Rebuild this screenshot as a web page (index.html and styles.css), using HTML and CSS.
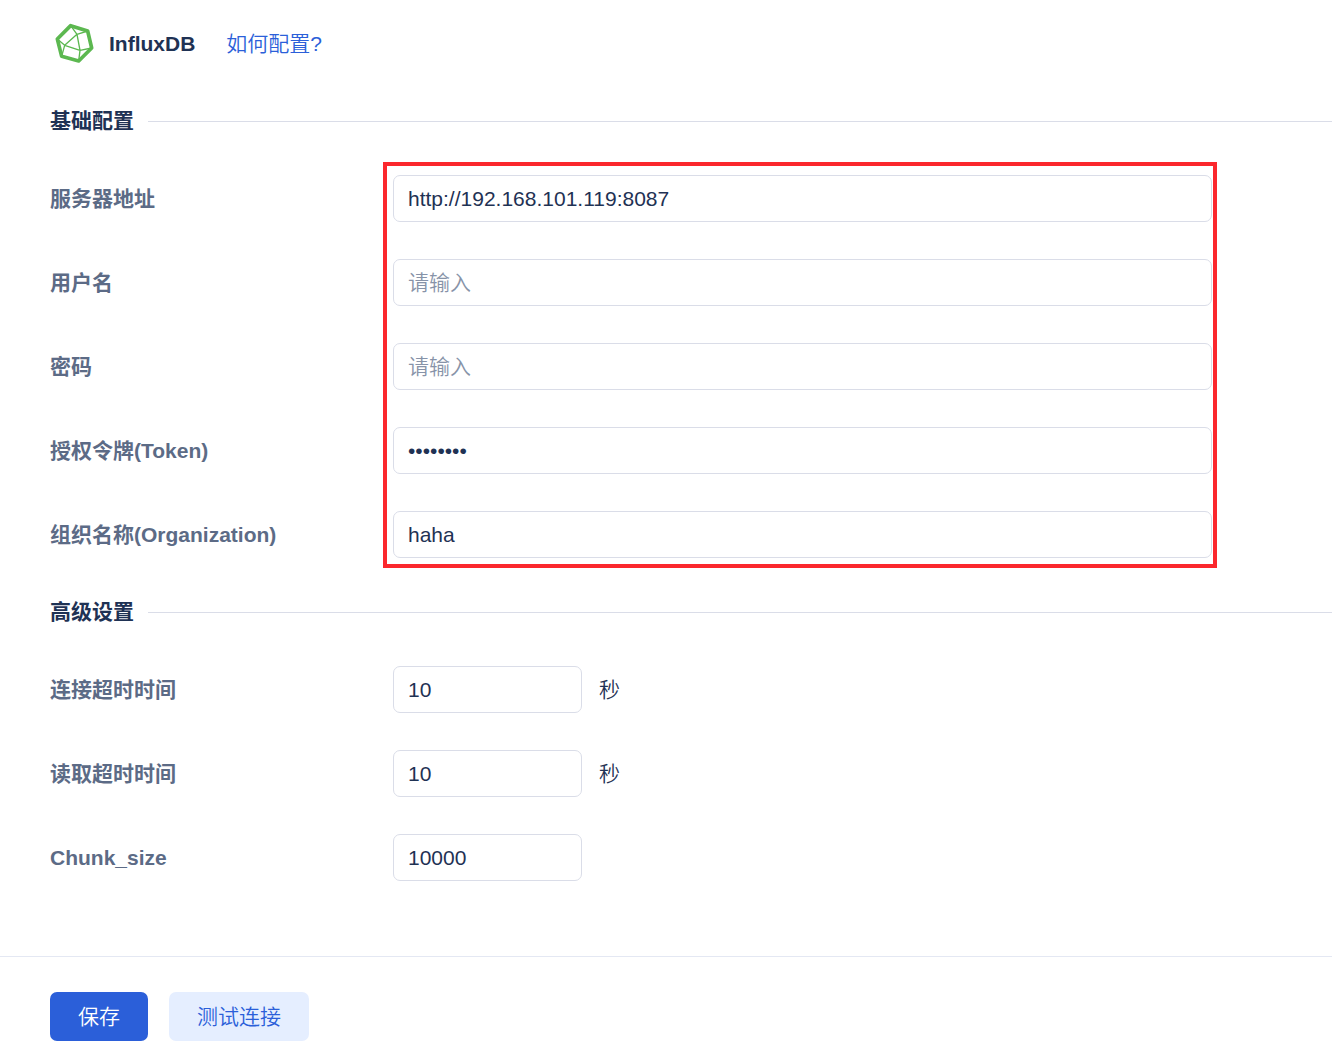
FILE: index.html
```html
<!DOCTYPE html>
<html lang="zh-CN">
<head>
<meta charset="utf-8">
<meta name="viewport" content="width=device-width, initial-scale=1">
<title>InfluxDB</title>
<link rel="stylesheet" href="styles.css">
</head>
<body>
<form class="page">
  <header class="header">
    <svg class="logo" viewBox="0 0 144 144" aria-hidden="true">
      <path class="logo-outline" d="M62 17 113 33 125 84 86 123 35 109 22 57Z"/>
      <path class="logo-facets" d="M62 17 81 43 113 33M81 43 44 76 90 91ZM22 57 44 76 35 109M125 84 90 91 86 123"/>
    </svg>
    <h1 class="title">InfluxDB</h1>
    <a class="help" href="#">如何配置?</a>
  </header>

  <section class="section">
    <h2 class="heading">基础配置</h2>
    <div class="rows highlight">
      <div class="row">
        <label class="label" for="server">服务器地址</label>
        <input class="input" id="server" type="text" value="http://192.168.101.119:8087">
      </div>
      <div class="row">
        <label class="label" for="user">用户名</label>
        <input class="input" id="user" type="text" placeholder="请输入">
      </div>
      <div class="row">
        <label class="label" for="password">密码</label>
        <input class="input" id="password" type="password" placeholder="请输入">
      </div>
      <div class="row">
        <label class="label" for="token">授权令牌(Token)</label>
        <input class="input" id="token" type="password" value="password">
      </div>
      <div class="row">
        <label class="label" for="org">组织名称(Organization)</label>
        <input class="input" id="org" type="text" value="haha">
      </div>
    </div>
  </section>

  <section class="section">
    <h2 class="heading">高级设置</h2>
    <div class="rows">
      <div class="row">
        <label class="label" for="connect">连接超时时间</label>
        <div class="measure"><input class="input short" id="connect" type="text" value="10"><span>秒</span></div>
      </div>
      <div class="row">
        <label class="label" for="read">读取超时时间</label>
        <div class="measure"><input class="input short" id="read" type="text" value="10"><span>秒</span></div>
      </div>
      <div class="row">
        <label class="label" for="chunk">Chunk_size</label>
        <input class="input short" id="chunk" type="text" value="10000">
      </div>
    </div>
  </section>

  <footer class="footer">
    <button class="button primary" type="button">保存</button>
    <button class="button secondary" type="button">测试连接</button>
  </footer>
</form>
</body>
</html>
```
FILE: styles.css
```css
* {
  box-sizing: border-box;
}

body {
  margin: 0;
  background: #fff;
  color: #1f3254;
}

body,
input,
button {
  font-family: "Liberation Sans", "Noto Sans CJK SC", sans-serif;
  font-size: 21px;
  line-height: 32px;
}

.page {
  padding-top: 20px;
}

.header {
  display: flex;
  align-items: center;
  gap: 11px;
  height: 47px;
  padding-left: 50px;
}

.logo {
  width: 48px;
  height: 48px;
  fill: none;
  stroke: #5cb850;
  stroke-linejoin: round;
}

.logo-outline {
  stroke-width: 11;
}

.logo-facets {
  stroke-width: 4;
}

.title {
  margin: 0;
  font-size: 21px;
}

.help {
  margin-left: 20px;
  color: #2b5fd9;
  font-weight: 350;
  text-decoration: none;
}

.section {
  padding: 38px 0 0 50px;
}

.heading {
  display: flex;
  align-items: center;
  gap: 14px;
  margin: 0 0 38px;
  font-size: 21px;
}

.heading::after {
  content: "";
  flex: 1;
  height: 1px;
  background: #dadde8;
}

.rows {
  display: grid;
  gap: 37px;
  max-width: 1162px;
}

.row {
  display: grid;
  grid-template-columns: 343px minmax(0, 1fr);
  align-items: center;
}

.label {
  color: #5c6b86;
  font-weight: 700;
}

.input {
  width: 100%;
  height: 47px;
  padding: 0 14px;
  border: 1px solid #dadde8;
  border-radius: 7px;
  background: #fff;
  color: #1f3254;
}

.input::placeholder {
  color: #8793a8;
  font-weight: 350;
  opacity: 1;
}

.short {
  width: 189px;
}

.measure {
  display: flex;
  align-items: center;
  gap: 17px;
  font-weight: 350;
}

.highlight {
  position: relative;
}

.highlight::after {
  content: "";
  position: absolute;
  inset: -13px -5px -10px 333px;
  border: 4px solid #fb272d;
  pointer-events: none;
}

.footer {
  display: flex;
  gap: 21px;
  margin-top: 75px;
  padding: 35px 50px 12px;
  border-top: 1px solid #e4e8f3;
}

.button {
  height: 49px;
  padding: 0 28px;
  border: 0;
  border-radius: 7px;
  font-weight: 350;
}

.primary {
  background: #2b5fd9;
  color: #fff;
}

.secondary {
  background: #e5eeff;
  color: #2b5fd9;
}
```
